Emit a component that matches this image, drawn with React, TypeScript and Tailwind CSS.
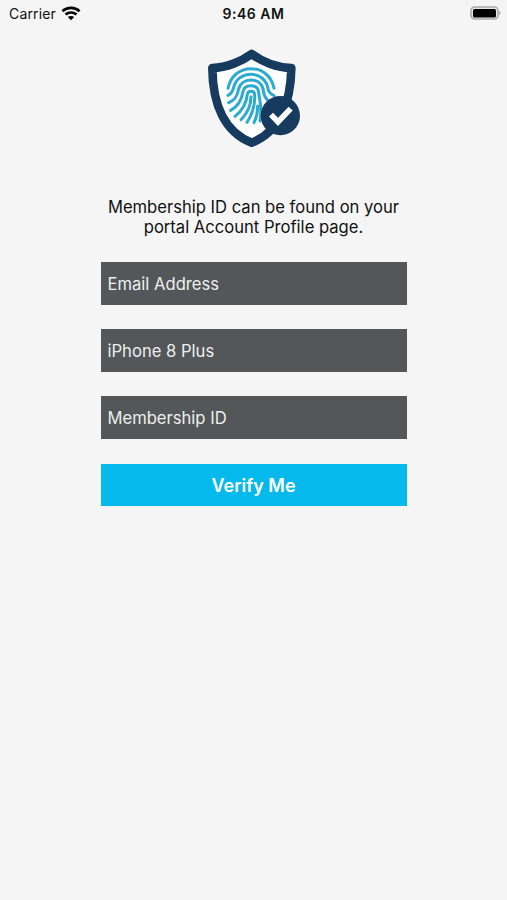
import React from 'react';

interface FieldProps {
  label: string;
  type?: string;
}

const ShieldLogo: React.FC = () => (
  <svg width="110" height="115" viewBox="0 0 330 345" fill="none">
    <path
      d="M155 42C125 64 80 83 37 84C38 195 75 277 155 308C235 277 272 195 274 84C230 83 185 64 155 42Z"
      fill="#fff"
      stroke="#173b5e"
      strokeWidth="26"
      strokeLinejoin="round"
    />
    <g stroke="#2cabd0" strokeWidth="9" strokeLinecap="round">
      <path d="M84 145C91 109 119 86 153 86C187 86 215 109 222 145" />
      <path d="M84 166C99 159 98 149 102 139C108 117 129 103 153 103C179 103 200 120 204 146C205 156 211 162 222 167" />
      <path d="M86 188C107 179 112 166 115 150C119 131 134 120 153 120C173 120 188 132 190 152C191 165 195 172 202 180" />
      <path d="M92 211C118 197 126 174 129 155C131 143 141 137 153 137C166 137 175 144 176 157C179 186 187 198 180 243" />
      <path d="M105 229C131 208 140 185 142 163C143 157 148 154 153 154C160 154 164 157 164 164C166 194 158 220 141 247" />
      <path d="M123 239C143 218 153 195 153 170" />
      <path d="M162 248C170 232 173 216 173 198" />
    </g>
    <circle cx="241" cy="227" r="59" fill="#173b5e" />
    <path d="M213 224L234 246L272 206" stroke="#fff" strokeWidth="17" />
  </svg>
);

const WifiIcon: React.FC = () => (
  <svg width="20" height="15" viewBox="0 0 20 15" fill="none" stroke="#080808" strokeWidth="2.7">
    <path d="M1.4 5.2C6.2 .7 13.8 .7 18.6 5.2" />
    <path d="M4.5 8.6C7.6 5.8 12.4 5.8 15.5 8.6" />
    <path d="M6.8 11.1C8.5 9.5 11.5 9.5 13.2 11.1L10 14.3Z" fill="#080808" stroke="none" />
  </svg>
);

const BatteryIcon: React.FC = () => (
  <svg width="32" height="14" viewBox="0 0 32 14">
    <rect x="1" y="1" width="27" height="12" rx="3.5" fill="#e8e8e8" stroke="#aaa" strokeWidth="1.6" />
    <rect x="3" y="3" width="23" height="8.5" rx="1.5" fill="#000" />
    <path d="M29.2 5C30.8 5.5 30.8 8.5 29.2 9Z" fill="#999" />
  </svg>
);

const StatusBar: React.FC = () => (
  <header className="grid h-[26px] grid-cols-3 items-center px-[5px] text-[14px] text-[#111]">
    <div className="flex items-center gap-[5px] pl-1">
      <span className="tracking-[0.15px]">Carrier</span>
      <WifiIcon />
    </div>
    <span className="text-center font-semibold tracking-[0.5px]">9:46 AM</span>
    <div className="flex justify-end">
      <BatteryIcon />
    </div>
  </header>
);

const Field: React.FC<FieldProps> = ({ label, type = 'text' }) => (
  <input
    type={type}
    placeholder={label}
    aria-label={label}
    className="block h-[42.6px] w-full bg-[#535759] px-[7px] pt-px text-[16.6px] text-[#eeeeee] outline-none placeholder:text-[#eeeeee] placeholder:opacity-100"
  />
);

const App: React.FC = () => {
  return (
    <div className="min-h-screen bg-[#f5f5f5] font-['Inter',sans-serif]">
      <StatusBar />
      <main className="mx-auto w-[306px] pt-3.5">
        <div className="flex justify-center pl-0.5">
          <ShieldLogo />
        </div>
        <p className="mt-[42px] text-center text-[16.6px] leading-5 text-[#111]">
          Membership ID can be found on your
          <br />
          portal Account Profile page.
        </p>
        <form className="mt-[25px] flex flex-col gap-[24.6px]">
          <Field label="Email Address" type="email" />
          <Field label="iPhone 8 Plus" />
          <Field label="Membership ID" />
          <button type="button" className="h-[42.6px] w-full bg-[#05b9ec] pt-px text-[18px] font-semibold text-white">
            Verify Me
          </button>
        </form>
      </main>
    </div>
  );
};

export default App;
